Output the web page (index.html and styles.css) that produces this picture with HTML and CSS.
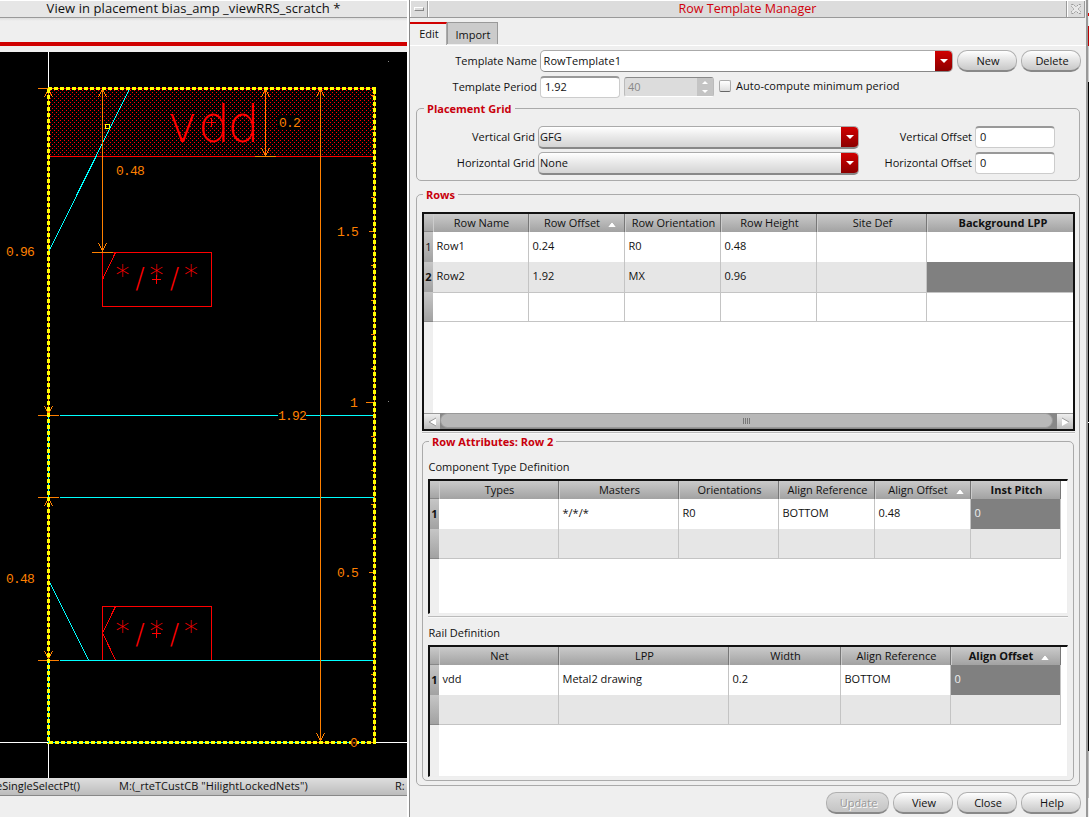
FILE: index.html
```html
<!DOCTYPE html>
<html lang="en">
<head>
<meta charset="utf-8">
<title>Row Template Manager</title>
<link rel="stylesheet" href="styles.css">
</head>
<body>
<div class="screen">
  <section class="editor">
    <div class="editor-title">View in placement bias_amp _viewRRS_scratch *</div>
    <div class="editor-menu"></div>
    <div class="editor-accent"></div>
    <div class="editor-gap"></div>
    <svg class="layout" viewBox="0 52 407 726" width="407" height="726">
      <defs>
        <pattern id="hatch" width="4" height="4" patternUnits="userSpaceOnUse">
          <rect x="0" y="0" width="1" height="1" fill="#f00"/>
          <rect x="2" y="2" width="1" height="1" fill="#f00"/>
        </pattern>
      </defs>
      <rect x="0" y="52" width="407" height="726" fill="#000"/>
      <path class="white" d="M48.5 52V88M48.5 743V778M0 742.5H48M375 742.5H407"/>
      <rect x="388" y="61" width="1" height="1" fill="#888"/>
      <rect x="388" y="401" width="1" height="1" fill="#888"/>
      <rect x="49" y="89" width="325" height="67" fill="url(#hatch)"/>
      <path class="red" d="M49 88.5H374M49 156.5H374M102.500 252.500H211.500V306.500H102.500ZM115.500 252.500L102.500 279.500M102.500 606.500H211.500V660.500H102.500ZM115.500 606.500L102.500 633L115.500 660M207 122.500H216M211.500 118V127M152 279.500H161M156.500 275V284M152 633.500H161M156.500 629V638"/>
      <path class="cyan" d="M129 90L49 251M49 581L88.500 660M60 415.500H374M60 497.500H374M60 660.500H374M48.500 415V497M48.500 660V742M48 742.500H374"/>
      <path class="orange" d="M48.500 88V415M48.500 497V660M102.500 88V252M265.500 88V156M320.500 88V742M374.500 88V742
        M38 88.500H59M38 415.500H59M38 497.500H59M38 660.500H59M92 252.500H113M255 156.500H276M310 742.500H331
        M44.500 97L48.500 89L52.500 97M98.500 97L102.500 89L106.500 97M261.500 97L265.500 89L269.500 97M316.500 97L320.500 89L324.500 97
        M44.500 406L48.500 414L52.500 406M44.500 506L48.500 498L52.500 506M44.500 651L48.500 659L52.500 651
        M98.500 243L102.500 251L106.500 243M261.500 148L265.500 156L269.500 148M316.500 733L320.500 741L324.500 733
        M369 231.500H374M366 402.500H374M369 572.500H374M366 742.500H374
        M371 95.500H374M371 129.500H374M371 163.500H374M371 197.500H374M371 265.500H374M371 300.500H374M371 334.500H374M371 368.500H374M371 436.500H374M371 470.500H374M371 504.500H374M371 538.500H374M371 606.500H374M371 640.500H374M371 674.500H374M371 708.500H374"/>
      <path class="dash" d="M48 88.500H376"/>
      <path class="dash" d="M48.500 89V744"/>
      <path class="dash" d="M374.500 90V744"/>
      <path class="dash" d="M49 742.500H376"/>
      <rect class="pin" x="105.500" y="124.500" width="4" height="4"/>
      <rect x="278" y="115" width="22" height="15" fill="#000"/>
      <rect x="278" y="409" width="28" height="14" fill="#000"/>
      <rect x="351" y="737" width="6" height="11" fill="#000"/>
      <text class="dim" x="6" y="256">0.96</text>
      <text class="dim" x="6" y="583">0.48</text>
      <text class="dim" x="116" y="175">0.48</text>
      <text class="dim" x="279" y="127">0.2</text>
      <text class="dim" x="278" y="420">1.92</text>
      <text class="dim" x="337" y="236">1.5</text>
      <text class="dim" x="350" y="407">1</text>
      <text class="dim" x="337" y="577">0.5</text>
      <text class="dim" x="350" y="747">0</text>
      <text class="net" x="167.500 198 227.500" y="142">vdd</text>
      <text class="cell" x="122.500 140 156.500 174.500 191" y="285 288 285 288 285">*/*/*</text>
      <text class="cell" x="122.500 140 156.500 174.500 191" y="641 644 641 644 641">*/*/*</text>
    </svg>
    <div class="status"><span>eSingleSelectPt()</span><span>M:(_rteTCustCB "HilightLockedNets")</span><span>R:</span></div>
  </section>

  <section class="dialog">
    <header class="titlebar">
      <div class="tb-button"><i class="tb-min"></i></div>
      <h1>Row Template Manager</h1>
      <div class="tb-button tb-close"><svg width="12" height="12" viewBox="0 0 12 12"><path d="M1.500 1.500h2l2 2h1l2-2h2v2l-2 2v1l2 2v2h-2l-2-2h-1l-2 2h-2v-2l2-2v-1l-2-2z" fill="#e8e8e8" stroke="#999" stroke-dasharray="2 1"/></svg></div>
    </header>
    <nav class="tabs"><div class="tab active">Edit</div><div class="tab">Import</div></nav>

    <div class="form">
      <div class="line">
        <label class="w-main raise">Template Name</label>
        <div class="combo edit"><span>RowTemplate1</span><b class="arrow"></b></div>
        <button class="btn">New</button><button class="btn">Delete</button>
      </div>
      <div class="line">
        <label class="w-main raise">Template Period</label>
        <div class="input">1.92</div>
        <div class="spin"><span>40</span><b><i class="up"></i><i class="down"></i></b></div>
        <i class="check"></i><span class="check-label">Auto-compute minimum period</span>
      </div>
    </div>

    <div class="group placement">
      <h2>Placement Grid</h2>
      <div class="grid-line"><label>Vertical Grid</label><div class="combo"><span>GFG</span><b class="arrow"></b></div><label class="off">Vertical Offset</label><div class="input">0</div></div>
      <div class="grid-line"><label>Horizontal Grid</label><div class="combo"><span>None</span><b class="arrow"></b></div><label class="off">Horizontal Offset</label><div class="input">0</div></div>
    </div>

    <div class="group rows">
      <h2>Rows</h2>
      <div class="table rows-table">
        <div class="tr head"><i></i><span>Row Name</span><span class="sort">Row Offset</span><span>Row Orientation</span><span>Row Height</span><span>Site Def</span><span class="bold">Background LPP</span></div>
        <div class="tr"><i>1</i><span>Row1</span><span>0.24</span><span>R0</span><span>0.48</span><span></span><span></span></div>
        <div class="tr alt"><i class="bold">2</i><span>Row2</span><span>1.92</span><span>MX</span><span>0.96</span><span></span><span class="sel"></span></div>
        <div class="tr"><i></i><span></span><span></span><span></span><span></span><span></span><span></span></div>
        <div class="rest"></div>
        <div class="scroll"><b><svg width="9" height="10" viewBox="0 0 9 10"><path d="M8 1L1 5L8 9Z" fill="#fff"/><path d="M8 1L1 5L8 9" fill="none" stroke="#999"/></svg></b><div class="track"><div class="thumb"><em></em><em></em><em></em><em></em></div></div><b><svg width="9" height="10" viewBox="0 0 9 10"><path d="M1 9V1L8 5Z" fill="#fff"/><path d="M1 1L8 5" fill="none" stroke="#999"/></svg></b></div>
      </div>
      <div class="rule"></div>

      <div class="group attrs">
        <h2>Row Attributes: Row 2</h2>
        <p>Component Type Definition</p>
        <div class="table sub types-table">
          <div class="tr head"><i></i><span>Types</span><span>Masters</span><span>Orientations</span><span>Align Reference</span><span class="sort">Align Offset</span><span class="bold">Inst Pitch</span></div>
          <div class="tr"><i class="bold">1</i><span></span><span>*/*/*</span><span>R0</span><span>BOTTOM</span><span>0.48</span><span class="sel">0</span></div>
          <div class="tr alt"><i></i><span></span><span></span><span></span><span></span><span></span><span></span></div>
          <div class="rest"></div>
        </div>
        <div class="rule"></div>
        <p>Rail Definition</p>
        <div class="table sub rail-table">
          <div class="tr head"><i></i><span>Net</span><span>LPP</span><span>Width</span><span>Align Reference</span><span class="bold sort">Align Offset</span></div>
          <div class="tr"><i class="bold">1</i><span>vdd</span><span>Metal2 drawing</span><span>0.2</span><span>BOTTOM</span><span class="sel">0</span></div>
          <div class="tr alt"><i></i><span></span><span></span><span></span><span></span><span></span></div>
          <div class="rest"></div>
        </div>
      </div>
    </div>

    <footer class="actions"><button class="btn wide disabled">Update</button><button class="btn">View</button><button class="btn">Close</button><button class="btn">Help</button></footer>
  </section>
  <div class="behind"></div>
</div>
</body>
</html>
```

FILE: styles.css
```css
* { box-sizing: border-box; }
body { margin: 0; overflow: hidden; font-family: "Open Sans", "Noto Sans", sans-serif; font-size: 11px; color: #111; background: #efefef; }
h1, h2, p { margin: 0; font-weight: normal; }
i, em { font-style: normal; }
.screen { display: grid; grid-template-columns: 409px 679px 1px; width: 1089px; height: 817px; overflow: hidden; }

/* Layout editor window */
.editor { display: flex; flex-direction: column; background: #efefef; border-right: 2px solid #fff; }
.editor-title { height: 18px; padding-right: 20px; text-align: center; font-size: 13px; letter-spacing: .07px; line-height: 15px; white-space: nowrap; background: #e6e6e6; border-top: 1px solid #fff; border-bottom: 1px solid #999; }
.editor-menu { height: 24px; background: linear-gradient(#dedede, #efefef 3px); }
.editor-accent { height: 4px; background: #d00000; }
.editor-gap { height: 6px; background: #efefef; }
.layout { display: block; flex: none; shape-rendering: crispEdges; }
.layout path { fill: none; stroke-width: 1; }
.white { stroke: #fff; }
.red { stroke: #f00; }
.cyan { stroke: #0ff; }
.orange { stroke: #ff8000; }
.layout .dash { stroke: #ff0; stroke-width: 3; stroke-dasharray: 4 2; }
.pin { fill: none; stroke: #ff0; }
.dim { fill: #ff8000; font-family: "Liberation Mono", monospace; font-size: 13px; letter-spacing: -0.8px; }
.net { fill: #f00; font-family: "DejaVu Sans", sans-serif; font-weight: 200; font-size: 51px; }
.cell { fill: #f00; font-family: "DejaVu Sans", sans-serif; font-weight: 200; font-size: 28px; text-anchor: middle; }
.status { display: grid; grid-template-columns: 119px 276px 12px; height: 18px; line-height: 16px; white-space: nowrap; background: linear-gradient(#dedede, #bcbcbc); border-bottom: 1px solid #888; overflow: hidden; }
.status span:first-child { margin-left: -4px; }
.status span:nth-child(2) { letter-spacing: .07px; }

/* Dialog frame */
.dialog { display: flex; flex-direction: column; background: #efefef; border-left: 1px solid #888; border-right: 2px solid #999; min-width: 0; }
.titlebar { display: flex; height: 18px; margin-right: 1px; border-top: 1px solid #fff; border-bottom: 1px solid #999; background: #dcdcdc; }
.titlebar h1 { flex: 1; text-align: center; font-size: 12.5px; line-height: 15px; color: #d0000a; border-left: 1px solid #fff; border-right: 1px solid #999; }
.tb-button { display: flex; align-items: center; justify-content: center; width: 18px; border-left: 1px solid #fff; border-right: 1px solid #999; }
.tb-min { width: 10px; height: 4px; border: 1px solid #fff; border-right-color: #888; border-bottom-color: #888; }
.tabs { display: flex; height: 28px; padding-top: 4px; border-bottom: 1px solid #fff; }
.tab { width: 51px; height: 22px; line-height: 24px; padding-left: 1px; text-align: center; background: #cbcbcb; border: 1px solid #999; border-bottom: 0; }
.tab.active { width: 37px; height: 23px; line-height: 20px; padding-left: 2px; background: #efefef; border: 0; border-top: 2px solid #d00000; border-right: 1px solid #aaa; }

/* Controls */
.form { display: flex; flex-direction: column; gap: 4px; padding: 4px 5px 0 0; }
.line { display: flex; align-items: center; height: 22px; white-space: nowrap; }
.w-main { width: 130px; padding-right: 3px; text-align: right; }
.raise { padding-bottom: 2px; }
.line label + div { flex: none; }
.combo { display: flex; width: 321px; height: 23px; padding-left: 1px; line-height: 20px; border: 1px solid #aaa; border-bottom: 2px solid #888; border-radius: 5px; background: linear-gradient(#fff, #e8e8e8 50%, #d4d4d4); overflow: hidden; }
.combo span { flex: 1; }
.combo.edit { width: 413px; height: 22px; background: #fff; margin-right: 4px; border-bottom: 1px solid #888; padding-left: 2.5px; }
.combo.edit span { letter-spacing: .1px; }
.arrow { display: flex; width: 17px; align-items: center; justify-content: center; background: linear-gradient(#d00000, #8c0000); }
.arrow::after { content: ""; border: 4px solid transparent; border-top-color: #fff; border-bottom: 0; }
.btn { width: 60px; height: 22px; padding: 0 0 0 2px; margin-right: 4px; font: inherit; color: #111; border: 1px solid #b0b0b0; border-bottom: 2px solid #888; border-radius: 10px; background: linear-gradient(#fff, #e8e8e8 40%, #c8c8c8); }
.btn:last-child { margin-right: 0; }
.btn.wide { width: 63px; }
.btn.disabled { color: #999; text-shadow: 1px 1px #fff; background: linear-gradient(#ddd, #c4c4c4); }
.input { width: 80px; height: 22px; padding-left: 4px; line-height: 18px; background: #fff; border: 1px solid #ccc; border-top: 2px solid #999; border-radius: 4px; }
.spin { display: flex; width: 90px; height: 20px; margin-left: 4px; padding-left: 3px; line-height: 18px; color: #888; background: #dcdcdc; border: 1px solid #bbb; border-top-color: #888; border-bottom-color: #fff; border-radius: 3px; }
.spin span { flex: 1; }
.spin b { display: flex; flex-direction: column; gap: 6px; width: 16px; align-items: center; justify-content: center; background: #c4c4c4; }
.up { border: 3px solid transparent; border-bottom-color: #fff; border-top: 0; }
.down { border: 3px solid transparent; border-top-color: #fff; border-bottom: 0; }
.check { width: 12px; height: 12px; margin: 0 5px 2px; border: 1px solid #aaa; border-bottom-color: #666; border-radius: 2px; background: linear-gradient(#fff, #ddd); }
.check-label { padding-bottom: 3px; letter-spacing: .05px; }

/* Group boxes */
.group { position: relative; border: 1px solid #aaa; border-radius: 5px; }
.group h2 { position: absolute; top: -8px; left: 7px; padding: 0 3px; font-size: 11px; line-height: 15px; font-weight: bold; color: #c8000c; background: #efefef; white-space: nowrap; }
.placement { display: flex; flex-direction: column; gap: 3px; height: 73px; margin: 10px 6px 0; padding-top: 17px; }
.grid-line { display: flex; height: 23px; line-height: 22px; white-space: nowrap; }
.grid-line label { width: 121px; padding-right: 3px; text-align: right; }
.grid-line .off { width: 116px; }

.rows { height: 592px; margin: 13px 6px 0; padding: 17px 4px 0 5px; }
.rows > h2 { left: 6px; }
.rows .attrs > h2 { left: 6px; }

/* Tables */
.table { display: flex; flex-direction: column; border: 2px solid #111; background: #fff; overflow: hidden; }
.tr { display: grid; height: 30px; line-height: 28px; flex: none; }
.tr span { padding-left: 3.5px; border-right: 1px solid #c4c4c4; border-bottom: 1px solid #c4c4c4; white-space: nowrap; overflow: hidden; }
.tr i { text-align: center; background: linear-gradient(#c6c6c6, #a2a2a2); border-bottom: 1px solid #888; line-height: 30px; }
.tr.head { height: 18px; line-height: 18px; background: linear-gradient(#cacaca, #a2a2a2); }
.tr.head i { background: none; }
.tr.head span { padding: 0 0 0 2px; text-align: center; border: 0; border-right: 1px solid #777; box-shadow: inset 1px 0 #ccc; }
.tr.alt span { background: #e6e6e6; }
.tr .sel, .tr.alt .sel { background: #808080; color: #eee; }
.bold { font-weight: bold; }
.tr.head .sort { padding-left: 0; }
.sort::after { content: ""; display: inline-block; margin-left: 8px; margin-right: -7px; border: 4px solid transparent; border-bottom: 5px solid #fff; border-top: 0; filter: drop-shadow(0 0 .6px #444); }
.rest { flex: 1; background: linear-gradient(90deg, #efefef 9px, #fff 9px); }
.rows-table { height: 219px; }
.rows-table .tr { grid-template-columns: 9px 96px 96px 96px 96px 110px 1fr; }
.rows-table .tr span:last-child { border-right: 0; padding-left: 6px; }
.sub { border-right: 1px solid #eee; border-bottom: 1px solid #eee; }
.types-table { height: 135px; }
.types-table .tr { grid-template-columns: 9px 120px 120px 100px 96px 96px 90px; width: 631px; }
.rail-table { height: 132px; }
.rail-table .tr { grid-template-columns: 9px 120px 170px 112px 110px 110px; width: 631px; }
.scroll { display: flex; height: 16px; background: #888; }
.scroll b { display: flex; width: 16px; align-items: center; justify-content: center; background: linear-gradient(#eee, #bbb); border-top: 1px solid #999; }
.track { flex: 1; padding-right: 4px; }
.thumb { display: flex; align-items: center; justify-content: center; gap: 1px; height: 15px; border: 1px solid #999; border-radius: 8px; background: #b8b8b8; }
.thumb em { width: 1px; height: 6px; background: #777; }
.rule { height: 2px; margin-top: 1px; border-top: 1px solid #bbb; border-bottom: 1px solid #f8f8f8; }
.attrs { height: 340px; margin-top: 7px; margin-right: 1px; padding: 18px 5px 0; }
.attrs p { height: 19px; padding-left: .5px; line-height: 14px; }
.attrs .rule { margin-top: 2px; margin-bottom: 8px; }

.actions { display: flex; justify-content: flex-end; padding: 6px 5px 0 0; }

/* Sliver of the window underneath */
.behind { background: linear-gradient(#eee 13px, #d00 13px 16px, #eee 16px 26px, #b00 26px 46px, #ccc 46px 82px, #000 82px 422px, #fff 422px 423px, #000 423px 751px, #bbb 751px 798px, #eee 798px); }
```
